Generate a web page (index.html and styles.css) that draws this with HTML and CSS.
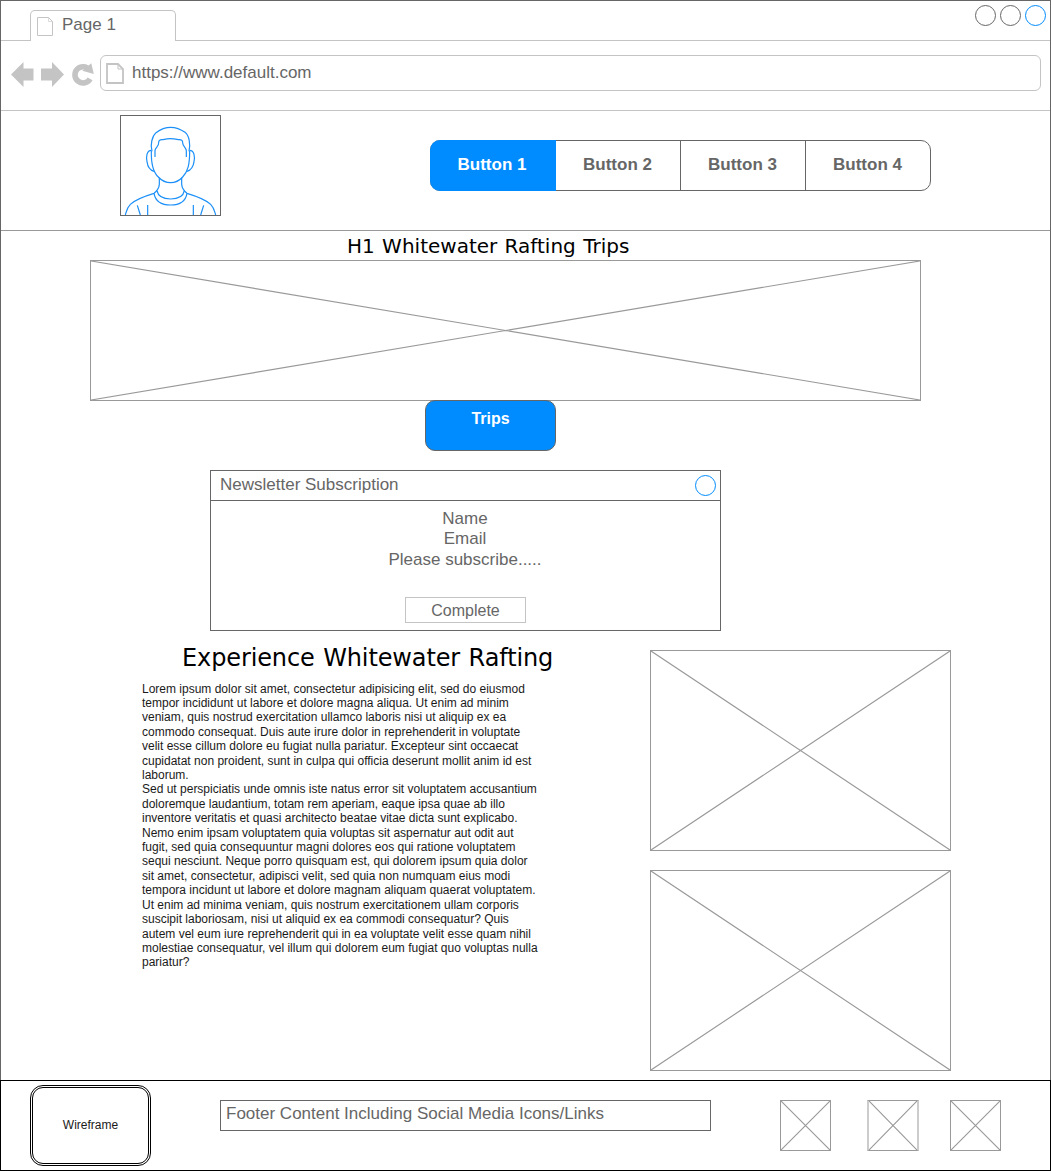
FILE: index.html
```html
<!DOCTYPE html>
<html lang="en">
<head>
<meta charset="utf-8">
<title>Page 1</title>
<link rel="stylesheet" href="styles.css">
</head>
<body>
<svg class="defs" width="0" height="0">
  <symbol id="cross" viewBox="0 0 100 100" preserveAspectRatio="none">
    <path d="M0 0L100 100M100 0L0 100" fill="none" stroke="#999" stroke-width="1.15" vector-effect="non-scaling-stroke"/>
  </symbol>
</svg>
<div class="window">
  <div class="tabbar">
    <div class="tab">
      <svg class="tab-icon" width="17" height="20" viewBox="0 0 17 20" fill="none" stroke="#c4c4c4"><path d="M.5 .5H11.5L15.5 4.5V18.5H.5Z"/><path d="M11.5 .5V4.5H15.5" stroke-opacity=".6"/></svg>
      <span>Page 1</span>
    </div>
    <div class="controls"><i class="dot"></i><i class="dot"></i><i class="dot blue"></i></div>
  </div>
  <div class="toolbar">
    <svg class="nav-icons" width="86" height="28" viewBox="0 0 86 28" fill="#c4c4c4">
      <path d="M0 14.5L12.5 2V8.5H22.5V20.5H12.5V27Z"/>
      <path d="M53 14.5L41 2V8.5H30V20.5H41V27Z"/>
      <path d="M79.1 18.8A8.1 8.1 0 1 1 78.4 9.8" fill="none" stroke="#c4c4c4" stroke-width="5.6"/>
      <path d="M80.3 3.2L82.8 14L71.3 10.8Z"/>
    </svg>
    <div class="address">
      <svg width="18" height="21" viewBox="0 0 18 21" fill="none" stroke="#c4c4c4" stroke-width="1.8"><path d="M1 1H12L17 6V20H1Z"/><path d="M12 1V6H17" stroke-width="1"/></svg>
      <span>https://www.default.com</span>
    </div>
  </div>
  <header class="header">
    <svg class="avatar" viewBox="30 30 303 303" fill="none" stroke="#1c90f8" stroke-width="3.6">
      <path d="M126 139C120 120 126 94 138 83C150 74 166 67 182 67C198 67 214 74 225 82C238 92 242 119 237 139"/>
      <path d="M135 156V136C136 128 147 124 146 113C146 106 150 104 156 104C163 104 164 101 181 101C198 101 202 104 208 104C214 104 218 106 218 113C218 123 228 127 229 137V156"/>
      <path d="M124 137C123 176 130 202 145 216C155 227 168 233 182 233C196 233 208 227 218 216C234 199 239 178 239 137"/>
      <path d="M124 136C110 136 108 155 111 170C113 186 118 195 132 199M239 136C253 136 255 155 252 170C250 186 244 195 231 199"/>
      <path d="M148 218V238C147 250 143 256 132 265C102 274 76 284 61 298C50 309 49 320 46 330M215 218V238C216 250 220 256 231 265C261 274 287 284 302 298C313 309 314 320 317 330"/>
      <path d="M141 257C144 274 158 282 182 282C206 282 220 274 223 257M132 265C136 288 154 300 182 300C210 300 227 288 231 265"/>
      <path d="M82 301L91 330M113 300V330M250 300V330M281 301L272 330"/>
      <rect x="31.5" y="31.5" width="300" height="300" stroke="#666" stroke-width="3"/>
    </svg>
    <nav class="buttons">
      <a class="active">Button 1</a><a>Button 2</a><a>Button 3</a><a>Button 4</a>
    </nav>
  </header>
  <main>
    <h1>H1 Whitewater Rafting Trips</h1>
    <div class="ph hero"><svg><use href="#cross"/></svg></div>
    <a class="trips">Trips</a>
    <section class="form">
      <div class="form-head"><span>Newsletter Subscription</span><i class="dot blue"></i></div>
      <div class="form-body">
        <p>Name<br>Email<br>Please subscribe.....</p>
        <div class="complete">Complete</div>
      </div>
    </section>
    <section class="columns">
      <article>
        <h2>Experience Whitewater Rafting</h2>
        <p>Lorem ipsum dolor sit amet, consectetur adipisicing elit, sed do eiusmod<br>tempor incididunt ut labore et dolore magna aliqua. Ut enim ad minim<br>veniam, quis nostrud exercitation ullamco laboris nisi ut aliquip ex ea<br>commodo consequat. Duis aute irure dolor in reprehenderit in voluptate<br>velit esse cillum dolore eu fugiat nulla pariatur. Excepteur sint occaecat<br>cupidatat non proident, sunt in culpa qui officia deserunt mollit anim id est<br>laborum.</p>
        <p>Sed ut perspiciatis unde omnis iste natus error sit voluptatem accusantium<br>doloremque laudantium, totam rem aperiam, eaque ipsa quae ab illo<br>inventore veritatis et quasi architecto beatae vitae dicta sunt explicabo.<br>Nemo enim ipsam voluptatem quia voluptas sit aspernatur aut odit aut<br>fugit, sed quia consequuntur magni dolores eos qui ratione voluptatem<br>sequi nesciunt. Neque porro quisquam est, qui dolorem ipsum quia dolor<br>sit amet, consectetur, adipisci velit, sed quia non numquam eius modi<br>tempora incidunt ut labore et dolore magnam aliquam quaerat voluptatem.<br>Ut enim ad minima veniam, quis nostrum exercitationem ullam corporis<br>suscipit laboriosam, nisi ut aliquid ex ea commodi consequatur? Quis<br>autem vel eum iure reprehenderit qui in ea voluptate velit esse quam nihil<br>molestiae consequatur, vel illum qui dolorem eum fugiat quo voluptas nulla<br>pariatur?</p>
      </article>
      <div class="pictures">
        <div class="ph"><svg><use href="#cross"/></svg></div>
        <div class="ph"><svg><use href="#cross"/></svg></div>
      </div>
    </section>
  </main>
</div>
<footer class="footer">
  <div class="brand"><div>Wireframe</div></div>
  <div class="footer-text">Footer Content Including Social Media Icons/Links</div>
  <div class="ph social"><svg><use href="#cross"/></svg></div>
  <div class="ph social light"><svg><use href="#cross"/></svg></div>
  <div class="ph social"><svg><use href="#cross"/></svg></div>
</footer>
</body>
</html>
```
FILE: styles.css
```css
* { box-sizing: border-box; }
body {
  margin: 0;
  width: 1051px;
  height: 1171px;
  overflow: hidden;
  background: #fff;
  color: #666;
  font: 17px/20px "Liberation Sans", Arial, sans-serif;
}
h1, h2, p { margin: 0; }
svg { display: block; flex: none; }
.defs { position: absolute; }
.window {
  height: 1080px;
  border: 1px solid #666;
  border-bottom: 0;
}

/* Browser chrome */
.tabbar {
  display: flex;
  justify-content: space-between;
  height: 40px;
  padding: 9px 4px 0 29px;
  background: linear-gradient(#c4c4c4, #c4c4c4) bottom / 100% 1px no-repeat;
}
.tab {
  display: flex;
  width: 146px;
  height: 31px;
  padding: 4px 0 0 6px;
  border: 1px solid #c4c4c4;
  border-bottom: 0;
  border-radius: 5px 5px 0 0;
  background: #fff;
}
.tab-icon { margin-top: 2px; }
.tab span { margin-left: 8px; }
.controls { display: flex; gap: 4px; margin-top: -5px; }
.dot {
  width: 21px;
  height: 21px;
  border: 1px solid #666;
  border-radius: 50%;
}
.dot.blue { border-color: #008cff; }
.toolbar {
  display: flex;
  height: 70px;
  padding: 14px 9px 0 10px;
  border-bottom: 1px solid #c4c4c4;
}
.nav-icons { margin: 5px 3px 0 0; }
.address {
  display: flex;
  flex: 1;
  height: 36px;
  padding: 7px 0 0 5px;
  border: 1px solid #c4c4c4;
  border-radius: 6px;
}
.address span { margin-left: 8px; }

/* Site header */
.header {
  display: flex;
  height: 120px;
  padding: 4px 0 0 119px;
  border-bottom: 1px solid #999;
}
.avatar { width: 101px; height: 101px; }
.buttons {
  display: flex;
  width: 501px;
  height: 51px;
  margin: 25px 0 0 209px;
  border: 1px solid #666;
  border-radius: 10px;
  font-weight: bold;
}
.buttons a {
  flex: 0 0 125px;
  padding: 14px 1px 0 0;
  border-left: 1px solid #666;
  text-align: center;
}
.buttons .active {
  margin: -1px 0 -1px -1px;
  padding: 15px 2px 0 0;
  flex-basis: 126px;
  border: 0;
  border-radius: 10px 0 0 10px;
  background: #008cff;
  color: #fff;
}
.buttons .active + a { border-left-color: transparent; margin-left: -1px; }

/* Page content */
main { display: flex; flex-direction: column; }
h1, h2 {
  color: #000;
  font-family: Verdana, "DejaVu Sans", sans-serif;
  font-weight: normal;
  white-space: nowrap;
}
h1 { height: 29px; padding: 1px 0 0 346px; font-size: 20px; line-height: 29px; word-spacing: 1px; }
.ph { border: 1px solid #999; }
.ph svg { width: 100%; height: 100%; }
.hero { width: 831px; height: 141px; margin-left: 89px; }
.trips {
  width: 131px;
  height: 51px;
  margin: -1px 0 0 424px;
  padding-top: 8px;
  border: 1px solid #666;
  border-radius: 10px;
  background: #008cff;
  color: #fff;
  font-size: 16px;
  font-weight: bold;
  text-align: center;
}
.form { width: 511px; height: 161px; margin: 19px 0 0 209px; border: 1px solid #666; }
.form-head {
  display: flex;
  justify-content: space-between;
  height: 30px;
  padding: 4px 4px 0 9px;
  border-bottom: 1px solid #666;
}
.form-body {
  display: flex;
  flex-direction: column;
  align-items: center;
  padding: 8px 0 0;
  line-height: 20.4px;
  text-align: center;
}
.form-body p { margin-left: -1px; }
.complete {
  width: 121px;
  height: 26px;
  margin-top: 27px;
  padding-top: 3px;
  border: 1px solid #c4c4c4;
  font-size: 16px;
}
.columns { display: flex; justify-content: space-between; padding: 0 99px 0 141px; }
article { color: #000; font-size: 12px; line-height: 14.4px; white-space: nowrap; }
h2 { height: 50.6px; padding: 13px 0 0 40px; font-size: 24px; line-height: 29px; letter-spacing: -.12px; word-spacing: 1px; }
article p { color: #1a1a1a; }
.pictures { display: flex; flex-direction: column; gap: 19px; padding-top: 19px; }
.pictures .ph { width: 301px; height: 201px; }

/* Footer */
.footer {
  display: flex;
  height: 91px;
  padding: 4px 0 0 29px;
  border: 1px solid #000;
}
.brand {
  width: 121px;
  height: 81px;
  padding: 1px;
  border: 1px solid #000;
  border-radius: 13px;
}
.brand div {
  height: 100%;
  border: 1px solid #000;
  border-radius: 11px;
  color: #1a1a1a;
  font-size: 12px;
  line-height: 75px;
  text-align: center;
}
.footer-text {
  width: 491px;
  height: 31px;
  margin: 15px 0 0 69px;
  padding: 3px 0 0 5px;
  border: 1px solid #666;
}
.social { width: 51px; height: 51px; margin: 15px 0 0 69px; }
.social + .social { margin-left: 36px; }
.social.light + .social { margin-left: 31px; }
.social.light {
  width: 52px;
  border-left: 2px solid #ccc;
  border-right: 2px solid #ccc;
}
```
